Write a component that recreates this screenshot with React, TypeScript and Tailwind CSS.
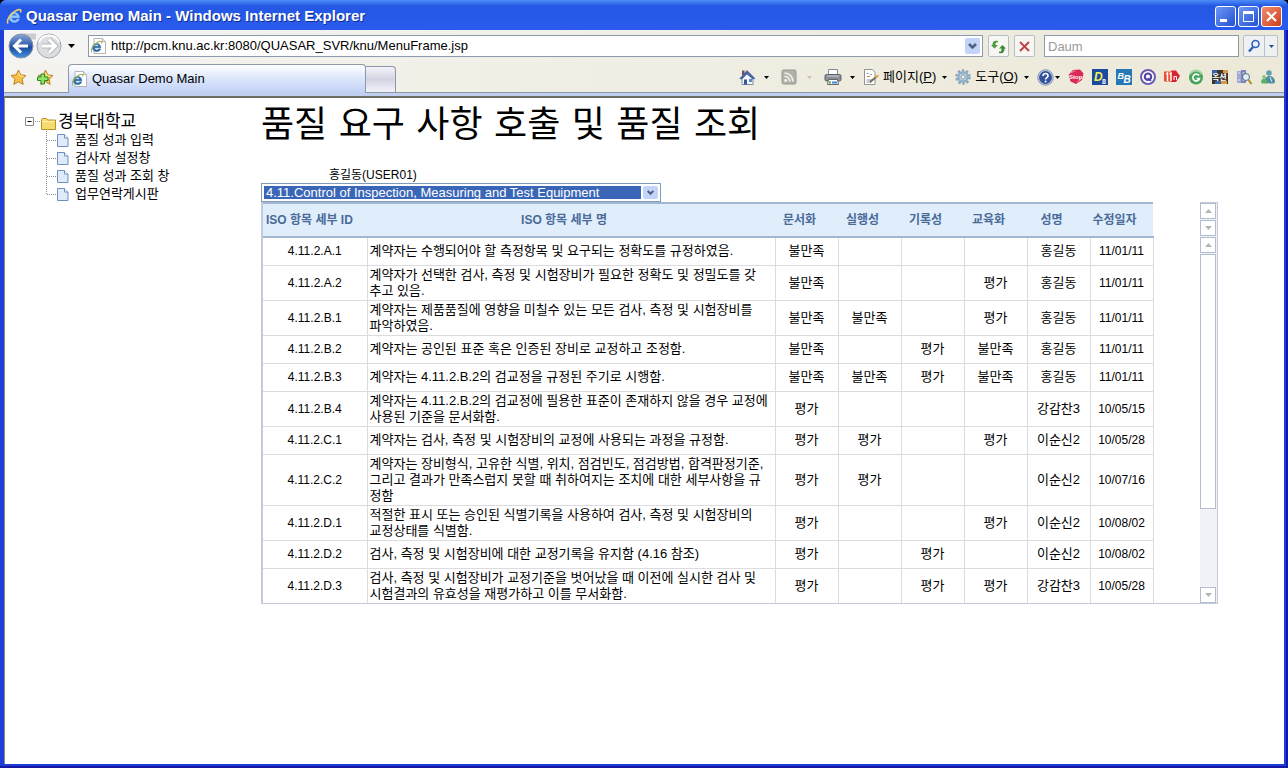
import React from 'react';

interface Row {
  id: string;
  name: string;
  marks: string[];
  person: string;
  date: string;
}

const BAD = '불만족';
const OK = '평가';

const rows: Row[] = [
  { id: '4.11.2.A.1', name: '계약자는 수행되어야 할 측정항목 및 요구되는 정확도를 규정하였음.', marks: [BAD, '', '', ''], person: '홍길동', date: '11/01/11' },
  { id: '4.11.2.A.2', name: '계약자가 선택한 검사, 측정 및 시험장비가 필요한 정확도 및 정밀도를 갖\n추고 있음.', marks: [BAD, '', '', OK], person: '홍길동', date: '11/01/11' },
  { id: '4.11.2.B.1', name: '계약자는 제품품질에 영향을 미칠수 있는 모든 검사, 측정 및 시험장비를\n파악하였음.', marks: [BAD, BAD, '', OK], person: '홍길동', date: '11/01/11' },
  { id: '4.11.2.B.2', name: '계약자는 공인된 표준 혹은 인증된 장비로 교정하고 조정함.', marks: [BAD, '', OK, BAD], person: '홍길동', date: '11/01/11' },
  { id: '4.11.2.B.3', name: '계약자는 4.11.2.B.2의 검교정을 규정된 주기로 시행함.', marks: [BAD, BAD, OK, BAD], person: '홍길동', date: '11/01/11' },
  { id: '4.11.2.B.4', name: '계약자는 4.11.2.B.2의 검교정에 필용한 표준이 존재하지 않을 경우 교정에\n사용된 기준을 문서화함.', marks: [OK, '', '', ''], person: '강감찬3', date: '10/05/15' },
  { id: '4.11.2.C.1', name: '계약자는 검사, 측정 및 시험장비의 교정에 사용되는 과정을 규정함.', marks: [OK, OK, '', OK], person: '이순신2', date: '10/05/28' },
  { id: '4.11.2.C.2', name: '계약자는 장비형식, 고유한 식별, 위치, 점검빈도, 점검방법, 합격판정기준,\n그리고 결과가 만족스럽지 못할 때 취하여지는 조치에 대한 세부사항을 규\n정함', marks: [OK, OK, '', ''], person: '이순신2', date: '10/07/16' },
  { id: '4.11.2.D.1', name: '적절한 표시 또는 승인된 식별기록을 사용하여 검사, 측정 및 시험장비의\n교정상태를 식별함.', marks: [OK, '', '', OK], person: '이순신2', date: '10/08/02' },
  { id: '4.11.2.D.2', name: '검사, 측정 및 시험장비에 대한 교정기록을 유지함 (4.16 참조)', marks: [OK, '', OK, ''], person: '이순신2', date: '10/08/02' },
  { id: '4.11.2.D.3', name: '검사, 측정 및 시험장비가 교정기준을 벗어났을 때 이전에 실시한 검사 및\n시험결과의 유효성을 재평가하고 이를 무서화함.', marks: [OK, '', OK, OK], person: '강감찬3', date: '10/05/28' },
];

const menu = ['품질 성과 입력', '검사자 설정창', '품질 성과 조회 창', '업무연락게시판'];
const headers = ['문서화', '실행성', '기록성', '교육화', '성명', '수정일자'];

const Caret = ({ color = '#000' }: { color?: string }) => (
  <svg width="5" height="3" viewBox="0 0 5 3" className="shrink-0">
    <path d="M0 0h5L2.5 3z" fill={color} />
  </svg>
);

const IE_LETTER = 'M12.600 9.200H5.200c.1 3 4 3.500 5 1.300h2.300C11.300 14.600 3 15 3 8.800 3 2.800 12.800 2.500 12.600 9.200zM5.300 7.400h4.900C10 4.700 5.600 4.700 5.300 7.400z';
const IE_RING = 'M2 14.500C-.5 11.500 5 4.500 10 2.200c3-1.400 4.800-.6 3.600 2';

const IeIcon = () => (
  <svg width="17" height="17" viewBox="0 0 16 16" className="shrink-0">
    <path d={IE_LETTER} fill="#8cc8fa" stroke="#8cc8fa" strokeWidth=".6" />
    <path d={IE_RING} fill="none" stroke="#e8cf6a" strokeWidth="1.500" />
  </svg>
);

const IePageIcon = () => (
  <svg width="16" height="16" viewBox="0 0 16 16" className="shrink-0">
    <path d="M3 .5h8.500l3 3v12H3z" fill="#fff" stroke="#b5b5ae" />
    <path d="M11.500.5v3h3" fill="#e8e8e8" stroke="#b5b5ae" />
    <g transform="translate(-1 2) scale(.85)">
      <path d={IE_LETTER} fill="#2a6aa8" stroke="#2a6aa8" strokeWidth=".8" />
      <path d={IE_RING} fill="none" stroke="#9aae4a" strokeWidth="1.300" />
    </g>
  </svg>
);

const STAR = 'M8.500 1l2.300 4.900 5.200.6-3.900 3.600 1.100 5.300-4.700-2.600-4.700 2.600 1.100-5.300L1 6.500l5.200-.6z';

const StarIcon = ({ plus }: { plus?: boolean }) => (
  <svg width="17" height="17" viewBox="0 0 17 17" className="shrink-0">
    <path d={STAR} fill="#f8c146" stroke="#b9802c" />
    <path d="M8.500 3.500l1.500 3.400 3.500.4" fill="none" stroke="#fff0a8" />
    {plus && <path d="M4 5h3.500v3H11v3.500H7.500V15H4v-3.500H.5V8H4z" fill="#8fe468" stroke="#2d8a24" />}
  </svg>
);

const HomeIcon = () => (
  <svg width="17" height="17" viewBox="0 0 17 17">
    <path d="M3 1.500h2.500V6H3z" fill="#7d4b5c" />
    <path d="M3 8l5-5 6 5v7.500H3z" fill="#f4f7fb" stroke="#7c8ba4" />
    <path d="M.8 9.500L8 1.500l8 8-2.500.5L8 5 3 10z" fill="#4a66a4" stroke="#3c5c9c" strokeWidth=".6" />
    <path d="M5 10.500h3v5H5z" fill="#35569a" />
    <path d="M10 10h3v3h-3z" fill="#5c86c4" />
  </svg>
);

const FeedIcon = () => (
  <svg width="16" height="16" viewBox="0 0 16 16">
    <rect x="1" y="1" width="14" height="14" rx="1.500" fill="#b3b2aa" stroke="#97968f" />
    <circle cx="4.700" cy="11.500" r="1.400" fill="#f4f3ec" />
    <path d="M3.500 7.200a5.300 5.300 0 0 1 5.300 5.300M3.500 4a8.500 8.500 0 0 1 8.500 8.500" fill="none" stroke="#f4f3ec" strokeWidth="1.600" />
  </svg>
);

const PrinterIcon = () => (
  <svg width="18" height="16" viewBox="0 0 18 16">
    <path d="M4.500.5h9V6h-9z" fill="#fff" stroke="#8d8d8d" />
    <rect x="1" y="5.500" width="16" height="6.500" rx="1.500" fill="#8a9098" stroke="#5c6168" />
    <path d="M3 7h12" stroke="#c9d0d8" />
    <path d="M4.500 10.500h9l1 5h-11z" fill="#fff" stroke="#666" />
    <path d="M8 12.500h5v2H8z" fill="#3f86d8" />
    <path d="M5 12.500h2v2H5z" fill="#4fae48" />
  </svg>
);

const PageIcon = () => (
  <svg width="16" height="16" viewBox="0 0 16 16">
    <path d="M1.500.5h8l2.500 3v12H1.500z" fill="#fdfdfb" stroke="#96938a" />
    <path d="M3.500 4.500h2M7 5.500h2M3.500 11h6M3.500 13h5" stroke="#8c9cc0" />
    <path d="M4 7.500h3" stroke="#d07d50" />
    <path d="M7 13l7.500-6" stroke="#7a6a50" strokeWidth="2" />
    <path d="M12.500 8.500l3-2.300" stroke="#e2b24a" strokeWidth="2" />
  </svg>
);

const GearIcon = () => (
  <svg width="16" height="16" viewBox="0 0 16 16">
    <circle cx="8" cy="8" r="6.500" fill="none" stroke="#8ba3b6" strokeWidth="2.500" strokeDasharray="2.400 1.700" />
    <circle cx="8" cy="8" r="4.600" fill="#dbe8f2" stroke="#8fb0c9" strokeWidth="2.600" />
    <circle cx="8" cy="8" r="2.200" fill="#f3f1e6" stroke="#6d8ba3" />
  </svg>
);

const HelpIcon = () => (
  <svg width="17" height="17" viewBox="0 0 17 17">
    <circle cx="8.500" cy="8.500" r="7.700" fill="#c9d3ea" stroke="#7c8cb4" />
    <circle cx="8.500" cy="8.500" r="6.400" fill="#34529c" />
    <path d="M6 7c0-3.400 5.200-3.200 5 0-.1 1.700-2.400 1.700-2.400 3.400" fill="none" stroke="#fff" strokeWidth="1.700" />
    <circle cx="8.600" cy="12.600" r="1" fill="#fff" />
  </svg>
);

const GlyphText = ({ x, y, size, children, fill = '#fff' }: { x: number; y: number; size: number; children: string; fill?: string }) => (
  <text x={x} y={y} fontSize={size} fill={fill} fontWeight="bold" fontFamily="Liberation Sans, Noto Sans CJK KR, sans-serif">
    {children}
  </text>
);

const addons: { label: string; icon: React.ReactNode }[] = [
  {
    label: 'Stop',
    icon: (
      <>
        <path d="M5 1l7-.5 3.500 4L14 11l-6 4-5.500-2.500L.5 6z" fill="#d92a55" />
        <path d="M2 4l5-2M9 13l4-3" stroke="#f08aa4" />
        <GlyphText x={1} y={10} size={6}>Stop</GlyphText>
      </>
    ),
  },
  {
    label: 'D8',
    icon: (
      <>
        <rect width="16" height="16" fill="#1c4b9e" />
        <text x="2" y="11.500" fontSize="12" fill="#f4ee5c" fontWeight="bold" fontStyle="italic" fontFamily="Liberation Sans, sans-serif">D</text>
        <GlyphText x={10} y={15} size={7}>8</GlyphText>
      </>
    ),
  },
  {
    label: 'BB',
    icon: (
      <>
        <rect width="16" height="16" fill="#2478b8" />
        <text x="1.500" y="9.500" fontSize="9" fill="#fff" fontWeight="bold" fontStyle="italic" fontFamily="Liberation Sans, sans-serif">B</text>
        <text x="7.500" y="13.500" fontSize="10" fill="#fff" fontWeight="bold" fontStyle="italic" fontFamily="Liberation Sans, sans-serif">B</text>
      </>
    ),
  },
  {
    label: 'Q',
    icon: (
      <>
        <circle cx="8" cy="8" r="7" fill="#fff" stroke="#6a5cb4" strokeWidth="2" />
        <circle cx="8" cy="7.700" r="3.200" fill="none" stroke="#5343a8" strokeWidth="2.200" />
        <path d="M8 9l3 3" stroke="#5343a8" strokeWidth="1.500" />
      </>
    ),
  },
  {
    label: '11',
    icon: (
      <>
        <path d="M0 2.500h7v10H0z" fill="#e8502c" />
        <path d="M7 1.500h5l4 5.500-4 6H7z" fill="#d9232e" />
        <path d="M2 5l1.500-1v8M5.500 5L7 4v8" fill="none" stroke="#fff" strokeWidth="1.500" />
        <path d="M10 11V7.500h2.500V11" fill="none" stroke="#fff" />
      </>
    ),
  },
  {
    label: 'G',
    icon: (
      <>
        <circle cx="8" cy="8.500" r="7" fill="#46a45c" />
        <path d="M2 5a7 7 0 0 1 12 0" fill="none" stroke="#a5d6a8" strokeWidth="2" />
        <path d="M11 6.500a3.400 3.400 0 1 0 .5 3H8.500" fill="none" stroke="#fff" strokeWidth="1.700" />
      </>
    ),
  },
  {
    label: '옥션',
    icon: (
      <>
        <rect y="1" width="16" height="14" fill="#3b342f" />
        <path d="M0 1h5v4H0zM3 12h6v3H3z" fill="#3c62a8" />
        <path d="M11 1h5v3h-5zM9 12h6v3H9z" fill="#d89a40" />
        <GlyphText x={0} y={11} size={8}>옥션</GlyphText>
      </>
    ),
  },
  {
    label: '리서치',
    icon: (
      <>
        <path d="M1 2h4v12H1z" fill="#a3a8d4" />
        <path d="M5 1h5v13H5z" fill="#7d82c0" />
        <path d="M2 4h2M6.500 4h2M2 11h2M6.500 11h2" stroke="#e8e6f6" />
        <circle cx="10" cy="8" r="3.500" fill="#dff0f8" stroke="#5b6a7a" />
        <path d="M12.500 11l3 4" stroke="#b08c28" strokeWidth="2" />
      </>
    ),
  },
  {
    label: '메신저',
    icon: (
      <>
        <circle cx="9" cy="4" r="2.800" fill="#5fa0b0" />
        <path d="M4 14c0-9 10-9 11-2 .2 2-1 2.500-3 2.500z" fill="#4b8ea0" />
        <circle cx="4" cy="8" r="1.800" fill="#7fbf72" />
        <path d="M1 13c0-4 5-4 6-1v2.500H2z" fill="#5fae6a" />
        <path d="M10 8l2 5" stroke="#d8eef0" />
      </>
    ),
  },
];

const BackForward = () => (
  <div className="flex items-center">
    <button aria-label="뒤로" className="h-[26px] w-[28px]">
      <svg width="28" height="26" viewBox="0 0 28 26">
        <defs>
          <linearGradient id="back" x1="0" y1="0" x2="0" y2="1">
            <stop offset="0" stopColor="#8ba6d4" />
            <stop offset=".45" stopColor="#3563b0" />
            <stop offset=".55" stopColor="#1d4a9c" />
            <stop offset="1" stopColor="#3f94e4" />
          </linearGradient>
        </defs>
        <path d="M14 .5h14v6H24z" fill="#c9cbd0" />
        <circle cx="13" cy="13" r="12" fill="url(#back)" stroke="#8a93a6" />
        <path d="M13 6.500L6.500 13l6.500 6.500M7.500 13H20" fill="none" stroke="#fff" strokeWidth="3" />
      </svg>
    </button>
    <button aria-label="앞으로" className="h-[26px] w-[26px]">
      <svg width="26" height="26" viewBox="0 0 26 26">
        <circle cx="13" cy="13" r="12" fill="#dcdee2" stroke="#a3a6ad" />
        <path d="M3 9a11 11 0 0 1 20 0" fill="none" stroke="#fff" strokeWidth="2" />
        <path d="M13 6.500l6.500 6.500-6.500 6.500M19 13H6" fill="none" stroke="#b4b7bd" strokeWidth="5" />
        <path d="M13 6.500l6.500 6.500-6.500 6.500M18.500 13H6" fill="none" stroke="#fff" strokeWidth="3" />
      </svg>
    </button>
  </div>
);

const DropArrow = () => (
  <svg width="15" height="100%" viewBox="0 0 15 16" className="shrink-0 rounded-xs bg-[#c4d3f8]">
    <path d="M4 6l3.500 3.500L11 6" fill="none" stroke="#4d6185" strokeWidth="2.500" />
  </svg>
);

const TitleBar = () => (
  <header className="flex h-[30px] items-center justify-between rounded-t-[6px] bg-linear-to-b from-[#4f8df5] via-[#2457e4] via-20% to-[#2a5bee] px-[6px]">
    <div className="flex items-center gap-[3px] pt-[2px]">
      <IeIcon />
      <h1 className="text-[15px] leading-[20px] font-bold text-white [text-shadow:1px_1px_#0f2f8f]">Quasar Demo Main - Windows Internet Explorer</h1>
    </div>
    <div className="flex gap-[2px] pt-[2px]">
      <button aria-label="최소화" className="h-[21px] w-[21px] rounded-[3px] border border-white bg-linear-to-br from-[#6d97f6] to-[#2450d0]">
        <svg width="19" height="19" viewBox="0 0 19 19"><path d="M4 12h7v3H4z" fill="#fff" /></svg>
      </button>
      <button aria-label="최대화" className="h-[21px] w-[21px] rounded-[3px] border border-white bg-linear-to-br from-[#6d97f6] to-[#2450d0]">
        <svg width="19" height="19" viewBox="0 0 19 19"><path d="M4.500 5h10v9.500h-10z" fill="none" stroke="#fff" /><path d="M4 4h11v3H4z" fill="#fff" /></svg>
      </button>
      <button aria-label="닫기" className="h-[21px] w-[21px] rounded-[3px] border border-white bg-linear-to-br from-[#ef8c6c] to-[#cf3a14]">
        <svg width="19" height="19" viewBox="0 0 19 19"><path d="M5 5l9 9M14 5l-9 9" stroke="#fff" strokeWidth="2.200" /></svg>
      </button>
    </div>
  </header>
);

const AddressRow = () => (
  <div className="flex h-[32px] items-center bg-linear-to-r from-[#f4f4f4] to-[#ece9d8] pr-[6px] pl-[4px]">
    <BackForward />
    <button aria-label="최근 페이지" className="ml-[4px] flex h-4 w-[10px] items-center justify-center">
      <svg width="7" height="4" viewBox="0 0 7 4"><path d="M0 0h7L3.500 4z" /></svg>
    </button>
    <div className="ml-[12px] flex h-[22px] flex-1 items-center border border-[#8b9bab] bg-white p-[2px]">
      <IePageIcon />
      <input aria-label="주소" defaultValue="http://pcm.knu.ac.kr:8080/QUASAR_SVR/knu/MenuFrame.jsp" className="ml-[4px] min-w-0 flex-1 text-[13px] outline-none" />
      <button aria-label="주소 목록" className="h-[16px]"><DropArrow /></button>
    </div>
    <button aria-label="새로 고침" className="ml-[5px] flex h-[22px] w-[21px] items-center justify-center rounded-xs border border-[#b8bfc6] bg-[#f6f6f2]">
      <svg width="15" height="15" viewBox="0 0 15 15">
        <path d="M7 3.500C4.500 3 4.500 4 4.500 6H7L3.500 9.500 0 6h1.500C1.500 2.500 3.500 1 7 2z" fill="#4c9a3c" />
        <path d="M8 12.500c2.500.5 2.500-.5 2.500-3H8L11.500 6 15 9.500h-1.500c0 4-2 5.500-5.500 4.500z" fill="#3c8a34" />
      </svg>
    </button>
    <button aria-label="중지" className="ml-[5px] flex h-[22px] w-[21px] items-center justify-center rounded-xs border border-[#b8bfc6] bg-[#f6f6f2]">
      <svg width="13" height="13" viewBox="0 0 13 13"><path d="M2 2l9 9M11 2l-9 9" stroke="#c2434b" strokeWidth="2" /></svg>
    </button>
    <input aria-label="검색" placeholder="Daum" className="ml-[9px] h-[22px] w-[195px] border border-[#8b9bab] bg-white px-[3px] text-[13px] outline-none placeholder:text-[#9a9a9a]" />
    <div className="ml-[4px] flex h-[22px] rounded-xs border border-[#b8c0cc] bg-[#eef0f2]">
      <button aria-label="검색 실행" className="flex w-[20px] items-center justify-center">
        <svg width="14" height="14" viewBox="0 0 14 14">
          <path d="M6 8l-4 4.500" stroke="#2f62b8" strokeWidth="2.500" />
          <circle cx="8.500" cy="5" r="3.500" fill="#e6f0fc" stroke="#2f62b8" strokeWidth="1.600" />
        </svg>
      </button>
      <button aria-label="검색 옵션" className="flex w-[13px] items-center justify-center border-l border-[#b8c0cc]"><Caret color="#24488c" /></button>
    </div>
  </div>
);

const TabRow = () => (
  <div className="flex h-[31px] items-end justify-between border-b border-[#8d97a8] bg-linear-to-r from-[#f4f3ee] to-[#ece9d8] pr-[8px] pl-[6px]">
    <div className="flex items-end">
      <div className="flex h-[30px] items-center gap-[10px] pr-[14px]">
        <button aria-label="즐겨찾기"><StarIcon /></button>
        <button aria-label="즐겨찾기에 추가"><StarIcon plus /></button>
      </div>
      <a href="#main" className="-mb-px flex h-[29px] w-[298px] items-center gap-[4px] rounded-t-[4px] border border-b-0 border-[#8d97a8] bg-linear-to-b from-white via-[#dbe6fb] to-[#c0cff6] pl-[3px] text-[13px]">
        <IePageIcon />
        Quasar Demo Main
      </a>
      <button aria-label="새 탭" className="h-[26px] w-[30px] rounded-tr-[4px] border border-b-0 border-l-0 border-[#8d97a8] bg-linear-to-b from-[#f2f3f9] via-[#d3d4e2] to-[#f2f3f9]" />
    </div>
    <div className="flex h-[30px] items-center text-[13px]">
      <button aria-label="홈" className="flex items-center gap-[8px]"><HomeIcon /><Caret /></button>
      <button aria-label="피드" className="ml-[12px] flex items-center gap-[10px]"><FeedIcon /><Caret color="#c6c3b6" /></button>
      <button aria-label="인쇄" className="ml-[12px] flex items-center gap-[8px]"><PrinterIcon /><Caret /></button>
      <button className="ml-[8px] flex items-center gap-[4px]">
        <PageIcon />
        <span>페이지(<u>P</u>)</span>
        <span className="pl-[2px]"><Caret /></span>
      </button>
      <button className="ml-[8px] flex items-center gap-[4px]">
        <GearIcon />
        <span>도구(<u>O</u>)</span>
        <span className="pl-[2px]"><Caret /></span>
      </button>
      <button aria-label="도움말" className="ml-[8px] flex items-center gap-[1px]"><HelpIcon /><Caret /></button>
      <div className="ml-[8px] flex gap-[8px]">
        {addons.map((a) => (
          <button key={a.label} aria-label={a.label}>
            <svg width="16" height="16" viewBox="0 0 16 16">{a.icon}</svg>
          </button>
        ))}
      </div>
    </div>
  </div>
);

const TreeMenu = () => (
  <nav className="w-[256px] shrink-0 pt-[14px] pl-[20px] text-[13px]">
    <div className="flex h-[18px] items-center">
      <svg width="33" height="18" viewBox="0 0 33 18">
        <path d="M.5 4.500h8v8h-8z" fill="#fff" stroke="#8a8a8a" />
        <path d="M2.500 8.500h4" stroke="#000" />
        <path d="M10 8.500h6" stroke="#999" strokeDasharray="1 1" />
        <path d="M16.500 6.500q0-1 1-1h4l1.500 1.500h7.500v9.500h-14z" fill="#f6dc6c" stroke="#b59228" />
        <path d="M17 8.500h13" stroke="#fdf3b4" />
      </svg>
      <a href="#root" className="text-[17px] leading-[18px]">경북대학교</a>
    </div>
    <ul>
      {menu.map((m, i) => (
        <li key={m} className="flex h-[18px] items-center">
          <svg width="50" height="18" viewBox="0 0 50 18">
            <path d={i === menu.length - 1 ? 'M21.500 0v9' : 'M21.500 0v18'} stroke="#888" strokeDasharray="1 1" />
            <path d="M22 9.500h9" stroke="#888" strokeDasharray="1 1" />
            <path d="M32.500 3.500h7l3.500 3.500v8.500H32.500z" fill="#dfeafb" stroke="#6f8fbe" />
            <path d="M39.500 3.500V7H43" fill="#fff" stroke="#6f8fbe" />
          </svg>
          <a href={`#menu-${i}`}>{m}</a>
        </li>
      ))}
    </ul>
  </nav>
);

const ScrollButton = ({ down, label }: { down?: boolean; label: string }) => (
  <button aria-label={label} className="flex h-[16px] w-full shrink-0 items-center justify-center border border-[#b4bdd0] bg-white">
    <svg width="7" height="4" viewBox="0 0 7 4"><path d={down ? 'M0 0h7L3.500 4z' : 'M0 4h7L3.500 0z'} fill="#b0b4bc" /></svg>
  </button>
);

const ResultTable = () => (
  <div className="flex justify-between border border-t-0 border-l-2 border-[#c3cadb]">
    <table className="w-[890px] table-fixed border-collapse text-[13px] leading-[16px]">
      <colgroup>
        <col className="w-[104px]" />
        <col className="w-[408px]" />
        {headers.map((h) => <col key={h} className="w-[63px]" />)}
      </colgroup>
      <thead>
        <tr className="h-[34px] border-y-2 border-[#a3b8d0] bg-[#e0eefc] text-[12px] text-[#4a6a98]">
          <th className="pl-[3px] text-left whitespace-nowrap">ISO 항목 세부 ID</th>
          <th className="pr-[14px]">ISO 항목 세부 명</th>
          {headers.map((h) => <th key={h} className="pr-[14px] whitespace-nowrap">{h}</th>)}
        </tr>
      </thead>
      <tbody>
        {rows.map((r) => (
          <tr key={r.id} className="h-[28px] border-b border-[#dcdce0] text-center last:border-b-0">
            <td className="border-r border-[#dcdce0] text-[12px]">{r.id}</td>
            <td className="border-r border-[#dcdce0] py-px pl-[2px] text-left whitespace-pre">{r.name}</td>
            {r.marks.map((m, i) => <td key={i} className="border-r border-[#dcdce0]">{m}</td>)}
            <td className="border-r border-[#dcdce0] whitespace-nowrap">{r.person}</td>
            <td className="border-r border-[#dcdce0] text-[12px]">{r.date}</td>
          </tr>
        ))}
      </tbody>
    </table>
    <div className="flex w-[17px] flex-col gap-px border-t border-[#c3cadb] bg-[#f0f2f8] pr-px">
      <ScrollButton label="머리글 위로" />
      <ScrollButton down label="머리글 아래로" />
      <ScrollButton label="위로" />
      <div className="flex-[255] border border-[#b4bdd0] bg-white" />
      <div className="flex-[76]" />
      <ScrollButton down label="아래로" />
    </div>
  </div>
);

const MainPane = () => (
  <main className="min-w-0 flex-1 pr-[66px]">
    <h2 className="pt-[4px] text-[36px] leading-[44px] whitespace-nowrap [font-family:'DejaVu_Sans','Noto_Sans_CJK_KR',sans-serif]">품질 요구 사항 호출 및 품질 조회</h2>
    <p className="pt-[20px] pl-[68px] text-[12px] leading-[16px]">홍길동(USER01)</p>
    <div className="flex h-[19px] w-[400px] border border-[#7f9db9] bg-white p-[2px]">
      <select aria-label="ISO 항목" className="min-w-0 flex-1 appearance-none bg-[#3a66b7] pl-[2px] text-[13px] leading-[13px] text-white">
        <option>4.11.Control of Inspection, Measuring and Test Equipment</option>
      </select>
      <span className="ml-[2px] flex"><DropArrow /></span>
    </div>
    <ResultTable />
  </main>
);

export default function App() {
  return (
    <div className="bg-black">
      <div className="flex min-h-screen flex-col rounded-t-[6px] bg-[#1d3fd8] text-black [font-family:'Liberation_Sans','Noto_Sans_CJK_KR',sans-serif]">
        <TitleBar />
        <div className="flex flex-1 flex-col border-r-2 border-b-2 border-[#1418a4]">
          <div className="mr-[2px] mb-[2px] ml-[4px] flex flex-1 flex-col bg-white">
            <AddressRow />
            <TabRow />
            <div className="h-[3px] bg-[#c0cef0]" />
            <div id="main" className="flex flex-1 border-t-2 border-l border-t-[#6c6c60] border-l-[#8c8c80] pt-px">
              <TreeMenu />
              <MainPane />
            </div>
          </div>
        </div>
      </div>
    </div>
  );
}
